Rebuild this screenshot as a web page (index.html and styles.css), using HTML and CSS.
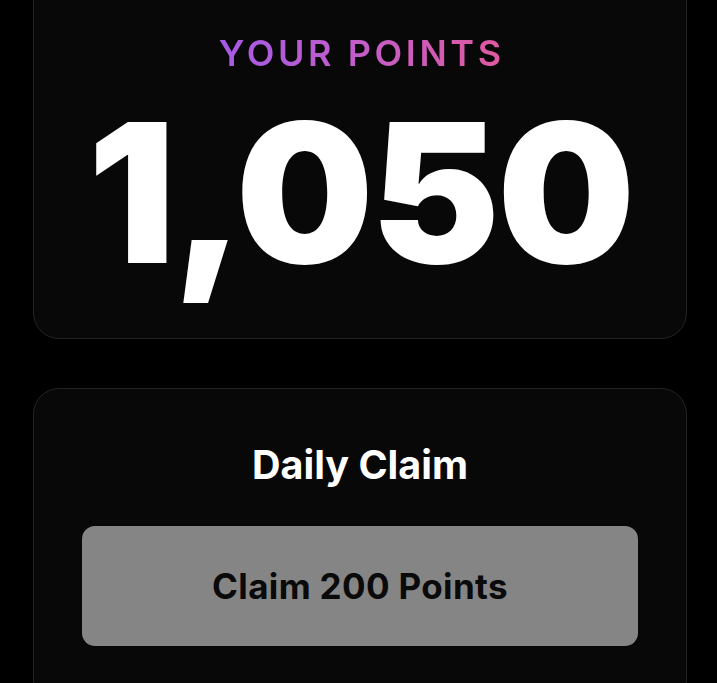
FILE: index.html
```html
<!DOCTYPE html>
<html lang="en">
<head>
<meta charset="utf-8">
<title>Points</title>
<link rel="stylesheet" href="styles.css">
</head>
<body>
<main class="page">
  <section class="card card-points">
    <div class="label">YOUR POINTS</div>
    <div class="points">1,050</div>
  </section>
  <section class="card card-claim">
    <h2 class="claim-title">Daily Claim</h2>
    <button class="claim-btn" type="button">Claim 200 Points</button>
  </section>
</main>
</body>
</html>
```
FILE: styles.css
```css
html, body {
  margin: 0;
  padding: 0;
  background: #000;
}
body {
  font-family: Inter, "Noto Sans", sans-serif;
  color: #fff;
  overflow: hidden;
}
.page {
  display: flex;
  flex-direction: column;
  gap: 49px;
  padding: 0 30px 0 33px;
  margin-top: -40px;
}
.card {
  width: 654px;
  box-sizing: border-box;
  background: #080808;
  border: 1.5px solid #232323;
  border-radius: 26px;
  display: flex;
  flex-direction: column;
  align-items: center;
}
.card-points {
  padding: 70px 0 49px;
}
.label {
  font-size: 36px;
  line-height: 44px;
  font-weight: 600;
  letter-spacing: 0.1em;
  margin-right: -0.1em;
  background: linear-gradient(90deg, #a55ae6 0%, #c35dc8 50%, #e0599f 100%);
  -webkit-background-clip: text;
  background-clip: text;
  color: transparent;
}
.points {
  margin-top: 22px;
  font-size: 194px;
  line-height: 192px;
  font-weight: 900;
  letter-spacing: -0.015em;
  color: #fff;
}
.card-claim {
  padding: 52px 48px 60px;
}
.claim-title {
  margin: 0;
  font-size: 39.5px;
  line-height: 48px;
  font-weight: 700;
}
.claim-btn {
  margin-top: 37px;
  width: 556px;
  height: 120px;
  border: none;
  border-radius: 13px;
  background: #858585;
  color: #0a0a0a;
  font-family: Inter, "Noto Sans", sans-serif;
  font-size: 35px;
  font-weight: 700;
  letter-spacing: 0.01em;
}
```
